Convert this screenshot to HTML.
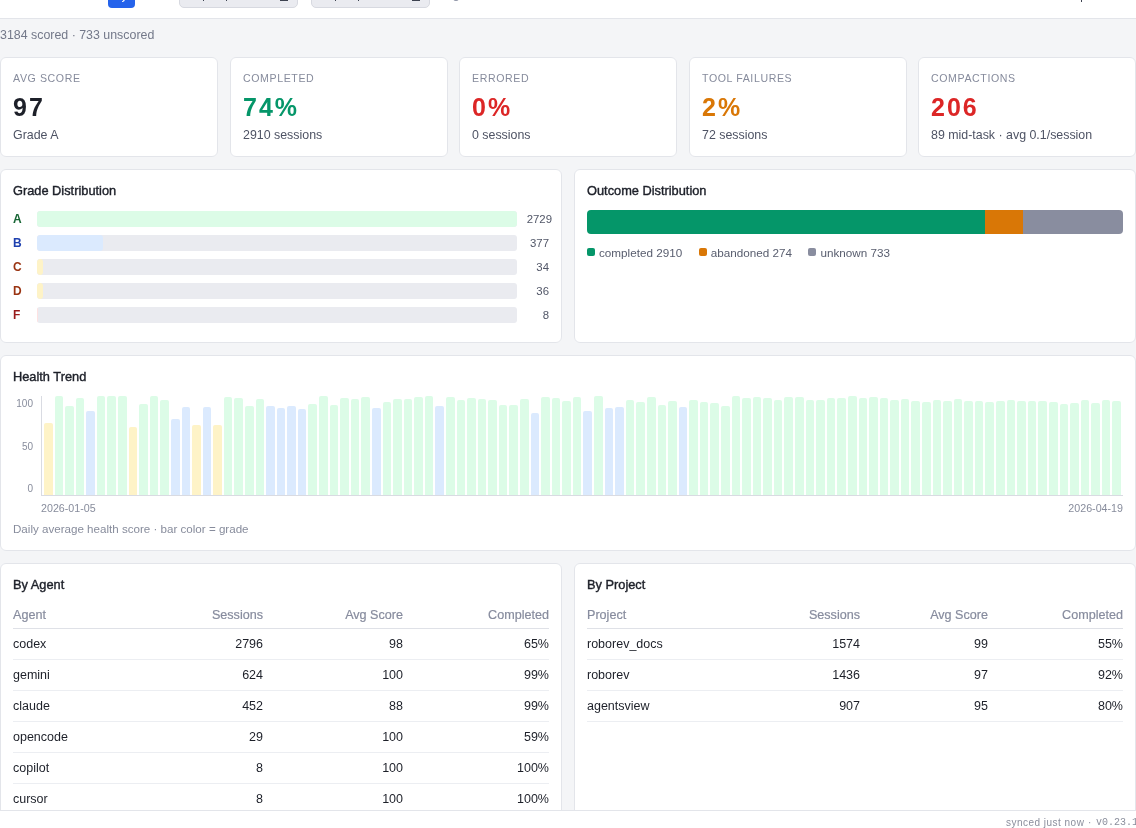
<!DOCTYPE html>
<html><head><meta charset="utf-8">
<style>
*{box-sizing:border-box;margin:0;padding:0}
html,body{width:1136px;height:828px;overflow:hidden}
.card,.sub,.foot{will-change:transform}
body{background:#f4f5f7;font-family:"Liberation Sans",sans-serif;color:#1d2029;position:relative}
.hdr{position:absolute;left:0;top:0;width:1136px;height:19px;background:#fff;border-bottom:1px solid #e3e5ea;overflow:hidden}
.hdr .btn{position:absolute;left:108px;top:-20px;width:27px;height:28px;background:#2563eb;border-radius:4px}
.hdr .inp{position:absolute;top:-20px;height:28px;background:#eaebf0;border:1px solid #d7d9e0;border-radius:5px}
.sub{position:absolute;left:0.3px;top:27px;font-size:12.4px;color:#737889;line-height:16px}
.card{position:absolute;background:#fff;border:1px solid #e3e5ea;border-radius:6px}
.stat{top:57px;height:100px;width:217.6px;padding:0 12px}
.stat .lbl{position:absolute;left:12px;top:71px;font-size:10.6px;letter-spacing:0.6px;color:#868b9c;text-transform:uppercase;line-height:13px}
.stat .val{position:absolute;left:12px;top:35px;font-size:25px;font-weight:bold;line-height:28px;letter-spacing:2px}
.stat .sm{position:absolute;left:12px;top:70px;font-size:12.4px;color:#4e5364;line-height:15px}
.ttl{position:absolute;left:12px;font-size:12.8px;font-weight:normal;-webkit-text-stroke:0.4px #1d2029;color:#1d2029;line-height:15px}
.gr{position:absolute;left:12px;width:536px;height:16px}
.gr b{position:absolute;left:0;top:1px;font-size:12px;line-height:15px}
.gr .tr{position:absolute;left:24px;top:0;width:480px;height:16px;background:#eaebf0;border-radius:3px;overflow:hidden}
.gr .tr i{position:absolute;left:0;top:0;bottom:0;border-radius:3px}
.gr span{position:absolute;right:0;width:30px;text-align:right;top:1px;font-size:11.4px;line-height:15px;color:#525768}
.ob{position:absolute;left:12px;top:40px;width:536px;height:24px;border-radius:4px;overflow:hidden;display:flex}
.lg{position:absolute;left:12px;top:75px;display:flex;font-size:11.7px;color:#585d6e;line-height:15px}
.lg div{display:flex;align-items:center;margin-right:16.5px}
.lg i{width:8px;height:8px;border-radius:2px;margin-right:4px;display:inline-block;position:relative;top:-1px}
.yl{position:absolute;left:12px;width:20px;text-align:right;font-size:10px;color:#878c9c;line-height:12px}
.ch{position:absolute;left:40px;top:40px;width:1082px;height:100px;border-left:1px solid #d9dbe2;border-bottom:1px solid #d9dbe2;display:flex;align-items:flex-end;gap:2px;padding:0 2px 0 2px}
.ch i{flex:1;border-radius:2px 2px 0 0;display:block}
.ch i.A{background:#dcfce7}.ch i.B{background:#dbeafe}.ch i.C{background:#fef3c7}
.dl{position:absolute;top:146px;font-size:10.7px;color:#878c9c;line-height:13px}
.cap{position:absolute;left:12px;top:165px;font-size:11.6px;color:#878c9c;line-height:15px}
.tb{position:absolute;left:12px;top:37px;width:536px}
.tb .r{display:flex;height:31px;border-bottom:1px solid #eceef2;font-size:12.5px;line-height:30px;color:#1d2029}
.tb .r.h{height:28px;line-height:29px;color:#878c9e;font-size:12.6px;border-bottom-color:#dfe1e7;-webkit-text-stroke:0.2px #878c9e}
.tb .r div{white-space:nowrap}
.tb .r div+div{text-align:right}
.foot{position:absolute;left:0;top:810px;width:1136px;height:18px;background:#fff;border-top:1px solid #e3e5ea;font-size:10px;letter-spacing:0.48px;color:#8a8e9c;line-height:16px;white-space:nowrap}
.foot span{position:absolute;top:4px}
</style></head><body>
<div class="hdr">
  <div class="btn"></div>
  <div class="inp" style="left:179px;width:119px"></div>
  <div class="inp" style="left:311px;width:119px"></div>
  <div style="position:absolute;left:121.5px;top:-1px;width:3.5px;height:3px;border-bottom:1.6px solid #fff;border-right:1.2px solid #fff;border-radius:0 0 3px 0"></div>
  <div style="position:absolute;left:203px;top:0;width:1px;height:1px;background:#3d4250"></div>
  <div style="position:absolute;left:226px;top:0;width:1px;height:1px;background:#3d4250"></div>
  <div style="position:absolute;left:280px;top:-1px;width:8px;height:2px;background:#3d4250"></div>
  <div style="position:absolute;left:335px;top:0;width:1px;height:1px;background:#3d4250"></div>
  <div style="position:absolute;left:358px;top:0;width:1px;height:1px;background:#3d4250"></div>
  <div style="position:absolute;left:412px;top:-1px;width:8px;height:2px;background:#3d4250"></div>
  <div style="position:absolute;left:453px;top:-5px;width:6px;height:6px;border-radius:3px;background:#8f94a6"></div>
  <div style="position:absolute;left:1081px;top:-1px;width:1.2px;height:3px;background:#3d4250"></div>
</div>
<div class="sub">3184 scored · 733 unscored</div>

<div class="card stat" style="left:0"><div class="lbl" style="top:14px">Avg Score</div><div class="val">97</div><div class="sm">Grade A</div></div>
<div class="card stat" style="left:229.6px"><div class="lbl" style="top:14px">Completed</div><div class="val" style="color:#059669">74%</div><div class="sm">2910 sessions</div></div>
<div class="card stat" style="left:459.2px"><div class="lbl" style="top:14px">Errored</div><div class="val" style="color:#dc2626">0%</div><div class="sm">0 sessions</div></div>
<div class="card stat" style="left:688.8px"><div class="lbl" style="top:14px">Tool Failures</div><div class="val" style="color:#d97706">2%</div><div class="sm">72 sessions</div></div>
<div class="card stat" style="left:918.4px"><div class="lbl" style="top:14px">Compactions</div><div class="val" style="color:#dc2626">206</div><div class="sm">89 mid-task · avg 0.1/session</div></div>

<div class="card" style="left:0;top:169px;width:562px;height:174px">
  <div class="ttl" style="top:13px">Grade Distribution</div>
  <div class="gr" style="top:41px"><b style="color:#166534">A</b><div class="tr"><i style="width:480px;background:#dcfce7"></i></div><span style="right:-3px">2729</span></div>
  <div class="gr" style="top:65px"><b style="color:#1e40af">B</b><div class="tr"><i style="width:66.3px;background:#dbeafe"></i></div><span>377</span></div>
  <div class="gr" style="top:89px"><b style="color:#9a3412">C</b><div class="tr"><i style="width:6px;background:#fef3c7"></i></div><span>34</span></div>
  <div class="gr" style="top:113px"><b style="color:#9a3412">D</b><div class="tr"><i style="width:6.3px;background:#fef3c7"></i></div><span>36</span></div>
  <div class="gr" style="top:137px"><b style="color:#991b1b">F</b><div class="tr"><i style="width:1.4px;background:#fee2e2"></i></div><span>8</span></div>
</div>
<div class="card" style="left:574px;top:169px;width:562px;height:174px">
  <div class="ttl" style="top:13px">Outcome Distribution</div>
  <div class="ob"><i style="width:398.2px;background:#059669"></i><i style="width:37.5px;background:#d97706"></i><i style="flex:1;background:#898d9f"></i></div>
  <div class="lg"><div><i style="background:#059669"></i>completed 2910</div><div><i style="background:#d97706"></i>abandoned 274</div><div><i style="background:#898d9f"></i>unknown 733</div></div>
</div>
<div class="card" style="left:0;top:355px;width:1136px;height:196px">
  <div class="ttl" style="top:13px">Health Trend</div>
  <div class="yl" style="top:42px">100</div>
  <div class="yl" style="top:85px">50</div>
  <div class="yl" style="top:127px">0</div>
  <div class="ch"><i class="C" style="height:71.7px"></i><i class="A" style="height:99.0px"></i><i class="A" style="height:89.0px"></i><i class="A" style="height:97.0px"></i><i class="B" style="height:83.9px"></i><i class="A" style="height:99.0px"></i><i class="A" style="height:99.0px"></i><i class="A" style="height:99.0px"></i><i class="C" style="height:67.7px"></i><i class="A" style="height:91.0px"></i><i class="A" style="height:99.0px"></i><i class="A" style="height:95.0px"></i><i class="B" style="height:76.0px"></i><i class="B" style="height:87.9px"></i><i class="C" style="height:69.7px"></i><i class="B" style="height:87.9px"></i><i class="C" style="height:69.7px"></i><i class="A" style="height:97.9px"></i><i class="A" style="height:97.0px"></i><i class="A" style="height:89.0px"></i><i class="A" style="height:95.9px"></i><i class="B" style="height:89.0px"></i><i class="B" style="height:87.0px"></i><i class="B" style="height:89.0px"></i><i class="B" style="height:85.9px"></i><i class="A" style="height:91.0px"></i><i class="A" style="height:99.0px"></i><i class="A" style="height:89.9px"></i><i class="A" style="height:97.0px"></i><i class="A" style="height:95.9px"></i><i class="A" style="height:97.9px"></i><i class="B" style="height:87.0px"></i><i class="A" style="height:93.0px"></i><i class="A" style="height:95.9px"></i><i class="A" style="height:95.9px"></i><i class="A" style="height:97.9px"></i><i class="A" style="height:99.0px"></i><i class="B" style="height:89.0px"></i><i class="A" style="height:97.9px"></i><i class="A" style="height:95.0px"></i><i class="A" style="height:97.0px"></i><i class="A" style="height:95.9px"></i><i class="A" style="height:95.0px"></i><i class="A" style="height:89.9px"></i><i class="A" style="height:89.9px"></i><i class="A" style="height:95.9px"></i><i class="B" style="height:81.9px"></i><i class="A" style="height:97.9px"></i><i class="A" style="height:97.0px"></i><i class="A" style="height:93.9px"></i><i class="A" style="height:97.9px"></i><i class="B" style="height:83.9px"></i><i class="A" style="height:99.0px"></i><i class="B" style="height:87.0px"></i><i class="B" style="height:87.9px"></i><i class="A" style="height:95.0px"></i><i class="A" style="height:93.0px"></i><i class="A" style="height:97.9px"></i><i class="A" style="height:89.9px"></i><i class="A" style="height:93.9px"></i><i class="B" style="height:87.9px"></i><i class="A" style="height:95.0px"></i><i class="A" style="height:93.0px"></i><i class="A" style="height:91.9px"></i><i class="A" style="height:89.0px"></i><i class="A" style="height:99.0px"></i><i class="A" style="height:97.0px"></i><i class="A" style="height:97.9px"></i><i class="A" style="height:97.0px"></i><i class="A" style="height:95.0px"></i><i class="A" style="height:97.9px"></i><i class="A" style="height:97.9px"></i><i class="A" style="height:95.0px"></i><i class="A" style="height:95.0px"></i><i class="A" style="height:97.0px"></i><i class="A" style="height:97.0px"></i><i class="A" style="height:99.0px"></i><i class="A" style="height:97.0px"></i><i class="A" style="height:97.9px"></i><i class="A" style="height:97.0px"></i><i class="A" style="height:95.0px"></i><i class="A" style="height:95.9px"></i><i class="A" style="height:93.9px"></i><i class="A" style="height:93.0px"></i><i class="A" style="height:95.0px"></i><i class="A" style="height:93.9px"></i><i class="A" style="height:95.9px"></i><i class="A" style="height:93.9px"></i><i class="A" style="height:93.9px"></i><i class="A" style="height:93.0px"></i><i class="A" style="height:93.6px"></i><i class="A" style="height:94.7px"></i><i class="A" style="height:93.6px"></i><i class="A" style="height:93.6px"></i><i class="A" style="height:93.6px"></i><i class="A" style="height:92.7px"></i><i class="A" style="height:90.7px"></i><i class="A" style="height:91.6px"></i><i class="A" style="height:94.7px"></i><i class="A" style="height:91.6px"></i><i class="A" style="height:94.7px"></i><i class="A" style="height:93.6px"></i></div>
  <div class="dl" style="left:40px">2026-01-05</div>
  <div class="dl" style="right:12px">2026-04-19</div>
  <div class="cap">Daily average health score · bar color = grade</div>
</div>
<div class="card" style="left:0;top:563px;width:562px;height:300px">
  <div class="ttl" style="top:13px">By Agent</div>
  <div class="tb">
    <div class="r h"><div style="width:130px">Agent</div><div style="width:120px">Sessions</div><div style="width:140px">Avg Score</div><div style="width:146px">Completed</div></div>
    <div class="r"><div style="width:130px">codex</div><div style="width:120px">2796</div><div style="width:140px">98</div><div style="width:146px">65%</div></div>
    <div class="r"><div style="width:130px">gemini</div><div style="width:120px">624</div><div style="width:140px">100</div><div style="width:146px">99%</div></div>
    <div class="r"><div style="width:130px">claude</div><div style="width:120px">452</div><div style="width:140px">88</div><div style="width:146px">99%</div></div>
    <div class="r"><div style="width:130px">opencode</div><div style="width:120px">29</div><div style="width:140px">100</div><div style="width:146px">59%</div></div>
    <div class="r"><div style="width:130px">copilot</div><div style="width:120px">8</div><div style="width:140px">100</div><div style="width:146px">100%</div></div>
    <div class="r"><div style="width:130px">cursor</div><div style="width:120px">8</div><div style="width:140px">100</div><div style="width:146px">100%</div></div>
  </div>
</div>
<div class="card" style="left:574px;top:563px;width:562px;height:300px">
  <div class="ttl" style="top:13px">By Project</div>
  <div class="tb">
    <div class="r h"><div style="width:150px">Project</div><div style="width:123px">Sessions</div><div style="width:128px">Avg Score</div><div style="width:135px">Completed</div></div>
    <div class="r"><div style="width:150px">roborev_docs</div><div style="width:123px">1574</div><div style="width:128px">99</div><div style="width:135px">55%</div></div>
    <div class="r"><div style="width:150px">roborev</div><div style="width:123px">1436</div><div style="width:128px">97</div><div style="width:135px">92%</div></div>
    <div class="r"><div style="width:150px">agentsview</div><div style="width:123px">907</div><div style="width:128px">95</div><div style="width:135px">80%</div></div>
  </div>
</div>
<div class="foot"><span style="left:1006px">synced just now</span><span style="left:1088px">·</span><span style="left:1096px;font-family:'Liberation Mono',monospace;font-size:10px;letter-spacing:0">v0.23.1</span></div>
</body></html>
